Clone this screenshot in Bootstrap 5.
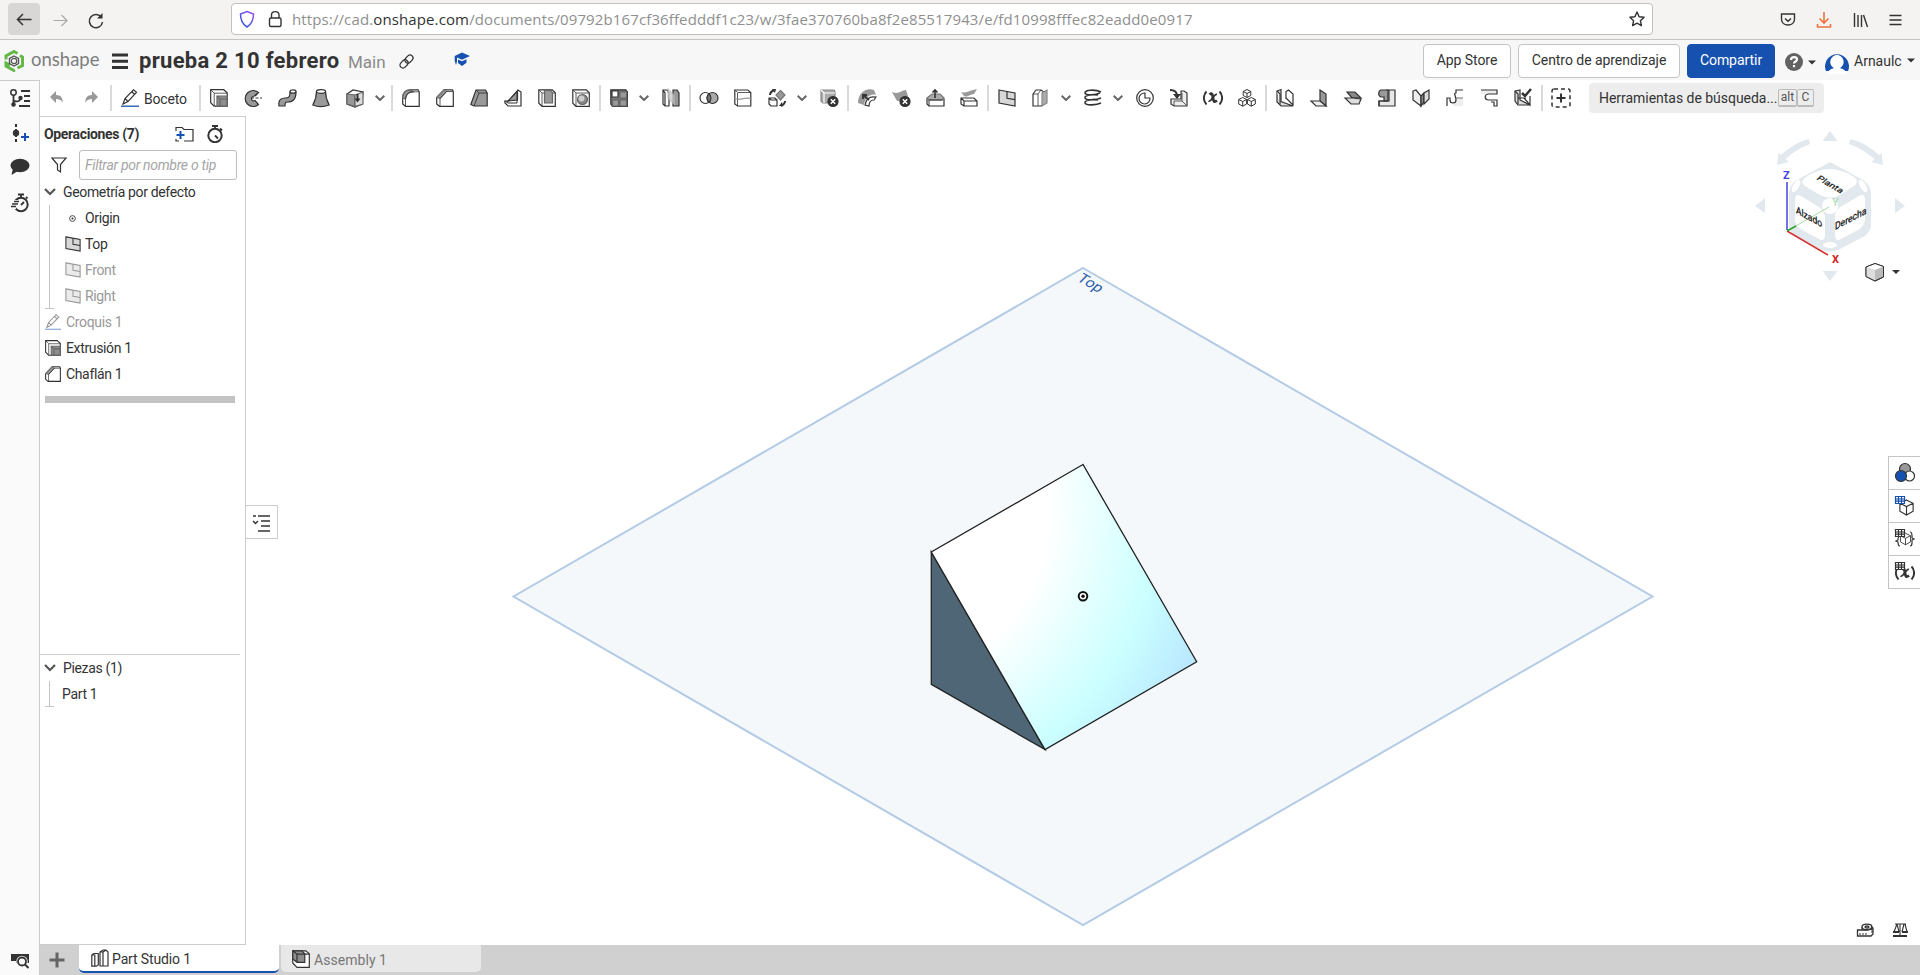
<!DOCTYPE html>
<html lang="es">
<head>
<meta charset="utf-8">
<title>prueba 2 10 febrero</title>
<meta name="viewport" content="width=device-width, initial-scale=1">
<link href="https://cdn.jsdelivr.net/npm/bootstrap@5.3.0/dist/css/bootstrap.min.css" rel="stylesheet">
<style>
html,body{height:100%}
body{font-family:Roboto,"Liberation Sans",sans-serif;font-size:14px;line-height:20px;color:#333;background:#fff;overflow:hidden}
svg{display:block;flex:none}
.ico{width:18px;height:18px;fill:none;stroke:#333;stroke-width:1.2;overflow:visible}
.browserbar{height:40px;background:#f4f3f2;border-bottom:1px solid #c6c4c2;font-family:"Open Sans",sans-serif}
.backbtn{width:32px;height:32px;background:#d8d7d6;border-radius:4px;margin:0 0 1px 8px}
.urlbox{width:1422px;height:32px;background:#fff;border:1px solid #c2c0be;border-radius:4px;margin-left:126px;margin-bottom:1px}
.urltext{font-size:15px;color:#8f8f8f;margin-left:8px;white-space:nowrap;letter-spacing:.12px}
.urltext b{font-weight:400;color:#333}
.dochead{height:40px;background:#f7f7f7;padding-top:1px}
.brandname{font-family:Lato,sans-serif;font-size:18.5px;color:#7d7d7d;margin-left:7px;width:81px;height:24px;line-height:20px}
.doctitle{font-size:22px;font-weight:700;line-height:40px;margin-left:11px;width:200px;white-space:nowrap;letter-spacing:.3px;padding-top:1px}
.maintxt{font-size:17px;color:#8b8b8b;margin-left:9px;width:50px;padding-top:3px}
.hbtn{height:34px;font-size:14px;padding:0;border:1px solid #c4c4c4;border-radius:4px;background:#fff;color:#333;letter-spacing:-.05px}
.hbtn.go{background:#1651b0;border-color:#1651b0;color:#fff}
.rail{width:40px;background:#fafafa;border-right:1px solid #ccc;border-top:1px solid #ccc}
.tools{height:36px}
.tool{width:34px;height:36px;display:flex;align-items:center;justify-content:center}
.tsep{width:2px;height:26px;background:#dadada;margin:0 1px}
.chev{width:18px;display:flex;justify-content:flex-start;padding-left:3px}
.chev svg{width:10px;height:6px;fill:none;stroke:#666;stroke-width:2}
.findbox{width:235px;height:30px;background:#ededed;border-radius:4px;margin-left:11px;padding-left:10px;white-space:nowrap}
.keycap{font-size:12px;line-height:15px;height:18px;border:1px solid #bbb;border-bottom-width:2px;border-radius:2px;color:#555;text-align:center}
.sidepanel{width:206px;border:1px solid #ccc;border-left:0;letter-spacing:-.35px}
.frow{height:26px;display:flex;align-items:center;white-space:nowrap}
.frow .ico{width:16px;height:16px}
.dim{color:#999}
.dim .ico{opacity:.5}
.filterbox{width:158px;height:30px;border:1px solid #bdbdbd;border-radius:3px;font-style:italic;color:#a5a5a5;padding:4px 5px;margin-left:12px;letter-spacing:-.3px}
.treegroup{margin-left:9px;position:relative}
.treegroup:before{content:"";position:absolute;left:0;top:0;bottom:0;width:1px;background:#c4c4c4}
.treegroup:after{content:"";position:absolute;left:-4px;bottom:0;width:9px;height:1px;background:#c4c4c4}
.rollbar{height:7px;width:190px;background:#c3c3c3;margin:9px 0 0 5px}
.flyout{position:absolute;left:0;top:389px;width:32px;height:34px;background:#fff;border:1px solid #ccc;border-left:0}
.sidebtns{position:absolute;right:0;top:340px;width:32px}
.sidebtns div{height:33px;border:1px solid #c4c4c4;border-right:0;border-bottom:0;background:#fff;padding:6px 0 0 6px}
.sidebtns div:last-child{border-bottom:1px solid #c4c4c4;height:34px}
.tabsbar{height:30px;background:#d0d0d0;letter-spacing:-.13px}
.stab{height:28px;width:200px;border-radius:0 0 5px 5px}
.stab.on{background:#fff;border-bottom:2px solid #1651b0}
.stab.off{background:#e8e8e8;color:#777;margin-left:2px;height:27px;letter-spacing:.05px}
</style>
</head>
<body class="d-flex flex-column">
<svg width="0" height="0" class="position-absolute">
<defs>
<symbol id="plane" viewBox="0 0 18 18"><path d="M1 1l16 3v13L1 14z" fill="#d8d8d8"/><path d="M9 2.500v6.800l8 1.400"/></symbol>
<symbol id="extrude" viewBox="0 0 18 18"><path d="M.7.7h13l3.500 3v13.500h-13l-3.500-3.500z" fill="#fff"/><path d="M4.200 17V4.200H17M1 1l3.200 3.200" stroke-width=".8"/><path d="M7 7h10v10H7z" fill="#8d8d8d" stroke="#666"/><path d="M7 7l3 3v7M10 10h7" stroke="#666"/></symbol>
<symbol id="chamfer" viewBox="0 0 18 18"><path d="M.7 8.500L8 .8h8.500l.8 1.500v15H3.500L.7 15z" fill="#fff"/><path d="M1 8.500L8 1l2.500 1.500L4 9.500z" fill="#999" stroke="#777"/><path d="M4 17V9.500l6.500-7H17" stroke-width=".8"/></symbol>
<symbol id="pencil" viewBox="0 0 18 18"><path d="M2 15L4 9.500 12.500.8l3 2.500L7 12.500zM4 9.500l3 3M10.800 2.800l3 2.700"/><path d="M0 17.200h18" stroke="#1651b0" stroke-width="1.300"/></symbol>
<symbol id="x" viewBox="0 0 18 18"><circle cx="9" cy="9" r="5" fill="#333"/><path d="M6.800 6.800l4.400 4.400m0-4.400l-4.400 4.400" stroke="#fff" stroke-width="1.500"/></symbol>
<symbol id="cube" viewBox="0 0 18 18"><path d="M9 1l7 3.500v8.500l-7 4-7-4V4.500zM2 4.500L9 8l7-3.500M9 8v9"/></symbol>
<symbol id="chv" viewBox="0 0 10 6"><path d="M.7.8L5 5 9.300.8"/></symbol>
<symbol id="fx" viewBox="0 0 20 18"><path d="M3.500 2.500C0 6 0 12 3.500 15.500M16.500 2.500c3.500 3.500 3.500 9.500 0 13" stroke-width="1.900"/><path d="M6.500 5.500C9 3.500 9.500 5 10 9s1.500 4.500 4 2.500" stroke-width="2.800"/><path d="M14 5.500C11 4 8.500 13.500 5.500 12" stroke-width="1.700"/></symbol>
<symbol id="watch" viewBox="0 0 18 18"><circle cx="9" cy="10.500" r="6.700" stroke-width="2"/><path d="M6 1h6M9 1v3M14 3.500l2 2M9 10.500l3 3" stroke-width="1.800"/></symbol>
</defs>
</svg>

<header class="browserbar d-flex align-items-center flex-shrink-0">
  <div class="backbtn d-flex align-items-center justify-content-center"><svg class="ico" viewBox="0 0 18 18"><path d="M2.500 9.500h14M8 4L2.500 9.500 8 15" stroke-width="1.500"/></svg></div>
  <svg class="ico" style="margin-left:11px;stroke:#aaa"><path d="M2.500 9.500h13.500M10.500 4L16 9.500 10.500 15"/></svg>
  <svg class="ico" style="margin-left:18px;stroke-width:1.500"><path d="M14.500 6.500A6.600 6.600 0 1 0 15.500 11"/><path d="M15.500 2v5.500h-5.500z" fill="#333" stroke="none"/></svg>
  <div class="urlbox d-flex align-items-center">
    <svg class="ico" style="margin-left:6px" viewBox="0 0 18 18"><defs><linearGradient id="shg" x1="0" x2="1" y1="1" y2="0"><stop stop-color="#1d5bd8"/><stop offset="1" stop-color="#a24df5"/></linearGradient></defs><path d="M9 1.500l6.500 2.500C15.500 10 14 14 9 17 4 14 2.500 10 2.500 4z" stroke="url(#shg)" stroke-width="1.500"/></svg>
    <svg class="ico" style="margin-left:10px;stroke-width:1.400"><rect x="3.500" y="8" width="11.500" height="8.500" rx="1.500"/><path d="M5.500 8V5c0-4.500 7.500-4.500 7.500 0v3"/></svg>
    <div class="urltext">https://cad.<b>onshape.com</b>/documents/09792b167cf36ffedddf1c23/w/3fae370760ba8f2e85517943/e/fd10998fffec82eadd0e0917</div>
    <svg class="ico ms-auto" style="margin-right:6px;stroke-width:1.400"><path d="M9 2l2.100 4.700 5 .5-3.700 3.500 1 5L9 13.200l-4.400 2.500 1-5L1.900 7.200l5-.5z" stroke-linejoin="round"/></svg>
  </div>
  <svg class="ico" style="margin-left:126px;stroke-width:1.400"><path d="M2.500 3h13v5c0 8-13 8-13 0zM6 7.500l3 2.800 3-2.800"/></svg>
  <svg class="ico" style="margin-left:18px;stroke:#f0743e;stroke-width:1.600"><path d="M9 1v10.500M4.500 7.500L9 12l4.500-4.500M2.500 13v3h13v-3"/></svg>
  <svg class="ico" style="margin-left:19px;stroke-width:1.400"><path d="M2.500 2v14M6 4v12M9.500 4v12M11.500 4l4 12"/></svg>
  <svg class="ico" style="margin-left:17px;stroke-width:1.300"><path d="M2.500 4.500h12M2.500 9h12M2.500 13.500h12"/></svg>
</header>

<section class="dochead d-flex align-items-center flex-shrink-0">
  <svg width="20" height="22" viewBox="0 0 20 22" style="margin-left:4px" fill="none" stroke="#62b946"><path d="M2 9.500V6l8-4.500 3.500 2M16 5.500l2.500 1.500v8.500L13.500 18M11 20l-1 .5L2 16v-3l4 2.300" stroke-width="3"/><path d="M10 6l4.500 2.500v5L10 16l-4.500-2.500v-5z" stroke="#555" stroke-width="1.400"/><circle cx="10" cy="11" r="2.700" stroke="#555" stroke-width="1.200"/></svg>
  <div class="brandname">onshape</div>
  <svg width="16" height="16" viewBox="0 0 16 16" stroke="#333" stroke-width="3"><path d="M0 2h16M0 8.300h16M0 14.500h16"/></svg>
  <div class="doctitle">prueba 2 10 febrero</div>
  <div class="maintxt">Main</div>
  <svg class="ico" style="width:16px;height:16px" viewBox="0 0 16 16"><g transform="translate(.5 .5) rotate(-45 8 8)"><rect x="0" y="5" width="9" height="6" rx="3"/><rect x="7" y="5" width="9" height="6" rx="3"/></g></svg>
  <svg width="16" height="16" viewBox="0 0 16 16" style="margin:-2px 0 0 40px" fill="#1651b0"><path d="M8 .5l8 3.500-8 3.700-5-2.300v4L2 13 .7 9V4zM4 7.500l4 1.800 4.500-2v3.500L8 14l-4-3z"/></svg>
  <button class="btn hbtn ms-auto" style="width:88px;margin-right:7px">App Store</button>
  <button class="btn hbtn" style="width:162px;margin-right:7px">Centro de aprendizaje</button>
  <button class="btn hbtn go" style="width:88px;margin-right:10px">Compartir</button>
  <svg width="18" height="18" viewBox="0 0 18 18" style="margin-top:3px"><circle cx="9" cy="9" r="9" fill="#626262"/><path d="M6 7c0-4 6-3.500 6-.5 0 2-3 2-3 4M9 12v2.200" fill="none" stroke="#fff" stroke-width="2.200"/></svg>
  <svg width="8" height="5" viewBox="0 0 8 5" style="margin:3px 9px 0 5px" fill="#333"><path d="M0 .5h8L4 4.500z"/></svg>
  <svg width="24" height="24" viewBox="0 0 24 24" style="margin-top:2px"><path d="M1 21a12 12 0 1 1 22 0z" fill="#1651b0"/><path d="M3 24c0-4 3-5 6-6-7-4-3-13 3-13s10 9 3 13c3 1 6 2 6 6z" fill="#fff"/></svg>
  <div style="margin-left:5px;width:53px">Arnaulc</div>
  <svg width="8" height="5" viewBox="0 0 8 5" style="margin-right:5px" fill="#333"><path d="M0 .5h8L4 4.500z"/></svg>
</section>

<div class="d-flex flex-grow-1" style="min-height:0">
  <nav class="rail d-flex flex-column flex-shrink-0 align-items-center">
    <svg class="ico" style="margin-top:8px;width:20px;height:18px;stroke-width:2" viewBox="0 0 20 18"><circle cx="3.500" cy="3.500" r="2.700" stroke-width="1.500"/><path d="M3.500 6v10M3.500 12c5 1 7 0 7-3" stroke-width="1.800"/><circle cx="10.500" cy="9" r="1.200" fill="#333"/><circle cx="3.500" cy="15.500" r="1.300" fill="#333"/><path d="M11 2h9M14 7h6M14 12h6M9 17h11"/></svg>
    <svg class="ico" style="margin-top:16px;width:20px;height:20px" viewBox="0 0 20 20"><path d="M6 1v18" stroke-dasharray="3 2" stroke-width="2"/><circle cx="6" cy="10" r="3.200" fill="#333" stroke="none"/><path d="M15 10v8M11 14h8" stroke="#1651b0" stroke-width="2"/></svg>
    <svg width="20" height="18" viewBox="0 0 20 18" style="margin-top:15px" fill="#333"><ellipse cx="10" cy="7.500" rx="9.500" ry="6.700"/><path d="M3 10l-1.500 7L8 13z"/></svg>
    <svg class="ico" style="margin-top:17px;width:19px;height:20px" viewBox="0 0 19 20"><circle cx="11" cy="11.500" r="6.700" stroke-width="2"/><path d="M8 1.500h6M11 2v3M16 4l1.500 1.500M11 12l3-3" stroke-width="1.800"/><path d="M3 8.500h6M1 11.500h7M0 14.500h6" stroke="#fafafa" stroke-width="3"/><path d="M4 8.500h5M2 11h6M1 13.500h5" stroke-width="1.300"/></svg>
    <svg width="20" height="16" viewBox="0 0 20 16" style="margin-top:auto;margin-bottom:6px" fill="none"><path d="M1 1h18v9H6V8H1z" fill="#333"/><circle cx="12" cy="8.500" r="5.700" fill="#fafafa"/><circle cx="12" cy="8.500" r="4" stroke="#333" stroke-width="1.800"/><path d="M15 11.500l3.500 3.500" stroke="#333" stroke-width="2"/></svg>
  </nav>
  <div class="d-flex flex-column flex-grow-1">
    <div class="tools d-flex align-items-center flex-shrink-0">
      <div class="tool"><svg class="ico"><path d="M8 2v4c5 0 7 3 6.500 8-1-3-3-4-6.500-4v4L2 8z" fill="#999" stroke="none"/></svg></div>
      <div class="tool" style="margin-right:1px"><svg class="ico"><path d="M10 2v4C5 6 3 9 3.500 14c1-3 3-4 6.500-4v4l6-6z" fill="#999" stroke="none"/></svg></div>
      <div class="tsep"></div>
      <div class="d-flex align-items-center" style="width:85px;padding-left:8px"><svg class="ico"><use href="#pencil"/></svg><span style="margin-left:5px;padding-top:2px;letter-spacing:-.2px">Boceto</span></div>
      <div class="tsep"></div>
      <div class="tool"><svg class="ico"><use href="#extrude"/></svg></div>
      <div class="tool"><svg class="ico"><path d="M14.500 3.500A8 8 0 1 0 14.500 15.500l-3.500-4c-4 2-5-4-.5-4.500z" fill="#999"/><path d="M7 9h11M11 7l4-3.500" stroke-dasharray="3 1.500"/></svg></div>
      <div class="tool"><svg class="ico"><path d="M1 17c-1-7 3-8 6-8 4 0 5-1 5-6h6c0 8-4 10-8 10-3 0-3 1-3 4z" fill="#999"/><ellipse cx="15" cy="2.500" rx="3" ry="1.700" fill="#fff"/></svg></div>
      <div class="tool"><svg class="ico"><path d="M4.500 2.500C4.500 9 3 12 .8 16c5 2 11 2 16.400 0C15 12 13.500 9 13.500 2.500z" fill="#999"/><ellipse cx="9" cy="2.500" rx="4.500" ry="1.800" fill="#fff"/></svg></div>
      <div class="tool"><svg class="ico"><path d="M1 5l6-4 10 2-1 12-7 3-8-3z" fill="#fff"/><path d="M1 5l8 1v11.500L1 15z" fill="#999" stroke="#666"/><path d="M9 6l8-3v12l-8 2.500z" fill="#ddd" stroke="#666"/><path d="M11.500 5v6" stroke-width="2"/><path d="M8.500 9.500h6l-3 4z" fill="#333" stroke="none"/></svg></div>
      <div class="chev"><svg><use href="#chv"/></svg></div>
      <div class="tsep"></div>
      <div class="tool"><svg class="ico"><path d="M.7 9C.7 3 4 .8 9 .8h7l1.200 2v14.500H3.500L.7 15z" fill="#fff"/><path d="M.7 9C.7 3 4 .8 9 .8l2 2C6 3 4 5 3.500 10z" fill="#999" stroke="#666"/><path d="M3.500 17v-7C4 5 6 3 11 2.800h6" stroke-width=".8"/></svg></div>
      <div class="tool"><svg class="ico"><use href="#chamfer"/></svg></div>
      <div class="tool"><svg class="ico"><path d="M.8 15.500L6 1h9.500l1.700 3v13H4z" fill="#999"/><path d="M4 17L9 4l-3-3M9 4h8" stroke-width=".9"/></svg></div>
      <div class="tool"><svg class="ico"><path d="M.8 12h4L14 1l3 2v14H4l-3-3z" fill="#fff"/><path d="M4 12L13.500 2v9z" fill="#999"/><path d="M1 12l3 2h9V2" stroke-width="1"/></svg></div>
      <div class="tool"><svg class="ico"><path d="M.8.8h13.500l3 3v13.500H4l-3.200-3z" fill="#fff"/><path d="M4 17V4M1 1l3 3h13" stroke-width=".8"/><path d="M6.500 1.500h6.500L14.500 4v10h-8z" fill="#999" stroke="#666"/></svg></div>
      <div class="tool"><svg class="ico"><path d="M.8.8h13.500l3 3v13.500H4l-3.200-3z" fill="#fff"/><path d="M4 17V4M1 1l3 3h13" stroke-width=".8"/><circle cx="10.500" cy="10.500" r="5" fill="#888" stroke="#666"/><circle cx="9.500" cy="9.500" r="3" fill="#ccc" stroke="none"/></svg></div>
      <div class="tsep"></div>
      <div class="tool"><svg class="ico"><path d="M.8.8h15l1.500 2v14.500H2.500L.8 15z" fill="#777"/><path d="M2 2h6v6H2z" fill="#fff"/><path d="M10 3h6.500v6H10zM2.500 11h6v6h-6zM10 11h6.500v6H10z" fill="#999" stroke="#666"/></svg></div>
      <div class="chev"><svg><use href="#chv"/></svg></div>
      <div class="tool"><svg class="ico"><path d="M1 1h4l2 3v13H3l-2-2zM3 17V4L1 1" fill="#fff"/><path d="M11 1h4l2 3v13h-6z" fill="#999"/><path d="M6 0l6 6v9L6 9z" fill="#ccc" stroke="#bbb" opacity=".8"/></svg></div>
      <div class="tsep"></div>
      <div class="tool"><svg class="ico"><circle cx="5.500" cy="9" r="5.500" fill="#fff"/><circle cx="12.500" cy="9" r="5.500" fill="#aaa"/><path d="M9 4.800a5.500 5.500 0 0 1 0 8.400 5.500 5.500 0 0 1 0-8.400" fill="#777"/></svg></div>
      <div class="tool"><svg class="ico"><path d="M.8 1h13l3 2.500V17H3.500L.8 15z" fill="#fff"/><path d="M.8 1l3 2.500h13M3.500 17V4" stroke-width=".8"/><path d="M0 9c6 4 9-2 18 1" stroke="#999"/></svg></div>
      <div class="tool"><svg class="ico"><path d="M1 9h6l2 2v6H3l-2-2zM1 9l2 2h6" fill="#fff"/><path d="M12.500 1.500l4.500 4.500-4.500 5L8 6z" fill="#999" stroke="#777"/><path d="M2 6q0-3 4-5M17 12q0 3-4 5" stroke-width="2"/><path d="M4 0h4L7 4zM14 13l-3 4h4z" fill="#333" stroke="none"/></svg></div>
      <div class="chev"><svg><use href="#chv"/></svg></div>
      <div class="tool"><svg class="ico"><path d="M1 1h13l1 2v11H3l-2-2z" fill="#aaa" stroke="#888"/><path d="M1 1l3 3h11M4 4v10" stroke="#fff"/><use href="#x" x="4" y="3.500" width="18" height="18"/></svg></div>
      <div class="tsep"></div>
      <div class="tool"><svg class="ico"><path d="M0 14C0 4 8-2 16 1l2 5C11 4 7 10 6 16z" fill="#999" stroke="none"/><path d="M7 16c1-6 5-9 11-8l-2 3c-4 0-5 3-5 6z" fill="#fff"/><path d="M11 11L5 6m0 4V6h4" stroke-width="1.800"/></svg></div>
      <div class="tool"><svg class="ico"><path d="M0 3c7 3 9-2 14-2l3 9c-5 0-8 2-12 2z" fill="#999" stroke="none"/><use href="#x" x="4" y="3.500" width="18" height="18"/></svg></div>
      <div class="tool"><svg class="ico"><path d="M1 10l5-4h8l4 4v7H3l-2-2z" fill="#fff"/><path d="M1 9l5-4h8l4 4-3 2H3z" fill="#aaa" stroke="#777"/><path d="M3 17v-6h14" stroke-width="1"/><path d="M9 9V1M6.500 3.500L9 1l2.500 2.500" stroke-width="1.600"/></svg></div>
      <div class="tool"><svg class="ico"><path d="M1 3c5 2 9-2 16-3l-3 5c-4 0-7 4-10 2z" fill="#999" stroke="none"/><path d="M1 9h13l3 3v5H4l-3-2zM1 9l3 3h13M4 12v5" fill="#fff"/></svg></div>
      <div class="tsep"></div>
      <div class="tool"><svg class="ico"><use href="#plane"/></svg></div>
      <div class="tool"><svg class="ico"><path d="M1 5l3-4h5l3 2v12l-3 2H1z" fill="#fff"/><path d="M1 5h5l3-4M6 5v12" stroke-width=".8"/><path d="M10 4l5-3v13l-5 3z" fill="#aaa" stroke="#888"/></svg></div>
      <div class="chev"><svg><use href="#chv"/></svg></div>
      <div class="tool"><svg class="ico" style="stroke-width:1.600"><path d="M17 3C11 0 0 1 1 4s11 2 15 0M14 6C9 5 0 6 1 9s12 2 16 0M14 11c-5-1-14 0-13 3s12 2 16 0"/></svg></div>
      <div class="chev"><svg><use href="#chv"/></svg></div>
      <div class="tool"><svg class="ico"><circle cx="9" cy="9" r="8.300"/><path d="M9 4v5h5a5.500 5.500 0 1 1-5-5z" fill="#fff"/></svg></div>
      <div class="tool"><svg class="ico"><path d="M1 10v5l3 2h13V4l-3-2h-3v8z" fill="#eee"/><path d="M4 17v-5h8V4M12 12l4 4" stroke-width=".8"/><path d="M0 1c5 0 7 2 7 6" stroke-width="2"/><path d="M3 5h8l-4 5z" fill="#333" stroke="none"/></svg></div>
      <div class="tool"><svg class="ico" style="width:20px" viewBox="0 0 20 18"><use href="#fx" width="20" height="18"/></svg></div>
      <div class="tool"><svg class="ico" viewBox="0 0 18 18"><g stroke-width="1"><path d="M9 .5l3.800 2v4L9 8.500l-3.800-2v-4zM5.200 2.500L9 4.500l3.800-2M9 4.500v4M4.700 8.500l3.900 2v4.500l-3.900 2.200-4-2.200v-4.500zM.7 10.500l4 2 3.900-2M4.700 12.500v4.700M13.300 8.500l4 2v4.500l-4 2.200-3.900-2.200v-4.500zM9.400 10.500l3.900 2 4-2M13.300 12.500v4.700"/></g></svg></div>
      <div class="tsep"></div>
      <div class="tool"><svg class="ico"><path d="M1 2l4-1.500v12l12 4.500H5l-4-4z" fill="#ddd"/><path d="M1 2l3 3v10.500M10 10V2.500L12.500 1 17 5v11L10 9" fill="#fff"/></svg></div>
      <div class="tool"><svg class="ico"><path d="M10 1l6 4v12l-6-5z" fill="#999"/><path d="M1 12h9l6 5H6z" fill="#eee"/></svg></div>
      <div class="tool"><svg class="ico"><path d="M3 3h8l6 6H8z" fill="#888"/><path d="M1 9h8l8 1-2 5H7z" fill="#ddd"/></svg></div>
      <div class="tool"><svg class="ico"><path d="M9 1h8v16H1v-5h8z" fill="#e8e8e8"/><path d="M3 1h7v11H6V8H3C0 7 0 2 3 1z" fill="#999"/><path d="M1 17v-5h10V1"/></svg></div>
      <div class="tool"><svg class="ico"><path d="M1 2l3-1 5 6v10l-8-6z" fill="#eee"/><path d="M9 7l3-3v9l-3 4z" fill="#888"/><path d="M12 4l5-3v9l-5 5z" fill="#ddd"/></svg></div>
      <div class="tool"><svg class="ico"><path d="M10 9h7v8H7v-4q4 0 3-4z" fill="#eee" stroke="none"/><path d="M1 17V9h3v2c0 4 6 4 6 0S7 4 10 4V1h7" stroke-width="1.200"/><path d="M10 9h7" stroke="#888"/></svg></div>
      <div class="tool"><svg class="ico"><path d="M1 1h16v4H7v6H4V5H1z" fill="#eee" stroke="none"/><path d="M1 1h16v4H9c-5 0-5 6 0 6h8v6h-3v-4h-3" stroke-width="1.200"/></svg></div>
      <div class="tool"><svg class="ico"><path d="M1 2l5-1v10l10 5H4l-3-4z" fill="#ddd"/><path d="M1 2l3 3v10M10 9l6 7V7M4 9h8" /><path d="M8 4l3 3 6-7" stroke-width="2.500"/></svg></div>
      <div class="tsep"></div>
      <div class="tool"><svg class="ico" style="width:20px;height:20px" viewBox="0 0 20 20"><rect x="1" y="1" width="18" height="18" rx="2" stroke-dasharray="4 3" stroke-width="1.500"/><path d="M10 5.500v9M5.500 10h9" stroke-width="2"/></svg></div>
      <div class="findbox d-flex align-items-center"><span style="width:179px;letter-spacing:-.03px">Herramientas de búsqueda...</span><span class="keycap" style="width:19px">alt</span><span class="keycap" style="width:17px">C</span></div>
    </div>
    <div class="d-flex flex-grow-1" style="min-height:0">
      <aside class="sidepanel d-flex flex-column flex-shrink-0">
        <div class="d-flex align-items-center" style="height:32px;padding:1px 0 0 4px"><b class="fw-bold" style="width:131px">Operaciones (7)</b>
          <svg class="ico" style="width:19px;height:16px" viewBox="0 0 19 16"><path d="M1 5V1.500h6l2 2h9V15H9M1 13v2h3"/><path d="M5.500 5v8M1.500 9h8" stroke="#1651b0" stroke-width="2"/></svg>
          <svg class="ico" style="margin-left:12px"><use href="#watch"/></svg></div>
        <div class="d-flex align-items-center" style="height:30px;padding-top:1px"><svg class="ico" style="width:16px;height:16px;margin-left:11px" viewBox="0 0 16 16"><path d="M1 1h14l-5.500 6.500V15L6.500 13V7.500z"/></svg><div class="filterbox">Filtrar por nombre o tip</div></div>
        <div class="frow"><svg width="12" height="8" viewBox="0 0 12 8" style="margin:0 7px 0 4px" fill="none" stroke="#555" stroke-width="2.200"><path d="M1 1l5 5 5-5"/></svg>Geometría por defecto</div>
        <div class="treegroup">
          <div class="frow" style="padding-left:20px"><svg class="ico" style="width:7px;height:7px" viewBox="0 0 8 8"><circle cx="4" cy="4" r="3.300" stroke-width="1"/><circle cx="4" cy="4" r="1.200" fill="#333" stroke="none"/></svg><span style="margin-left:9px">Origin</span></div>
          <div class="frow" style="padding-left:16px"><svg class="ico"><use href="#plane"/></svg><span style="margin-left:4px">Top</span></div>
          <div class="frow dim" style="padding-left:16px"><svg class="ico"><use href="#plane"/></svg><span style="margin-left:4px">Front</span></div>
          <div class="frow dim" style="padding-left:16px"><svg class="ico"><use href="#plane"/></svg><span style="margin-left:4px">Right</span></div>
        </div>
        <div class="frow dim" style="padding-left:5px"><svg class="ico"><use href="#pencil"/></svg><span style="margin-left:5px">Croquis 1</span></div>
        <div class="frow" style="padding-left:5px"><svg class="ico"><use href="#extrude"/></svg><span style="margin-left:5px">Extrusión 1</span></div>
        <div class="frow" style="padding-left:5px"><svg class="ico"><use href="#chamfer"/></svg><span style="margin-left:5px">Chaflán 1</span></div>
        <div class="rollbar"></div>
        <div class="mt-auto" style="height:290px;margin-right:5px;border-top:1px solid #ccc">
          <div class="frow"><svg width="12" height="8" viewBox="0 0 12 8" style="margin:0 7px 0 4px" fill="none" stroke="#555" stroke-width="2.200"><path d="M1 1l5 5 5-5"/></svg>Piezas (1)</div>
          <div class="treegroup"><div class="frow" style="padding-left:13px">Part 1</div></div>
        </div>
      </aside>
      <main class="position-relative flex-grow-1">
        <svg width="1674" height="828" viewBox="246 116 1674 828">
          <defs><radialGradient id="face" gradientUnits="userSpaceOnUse" cx="867" cy="507" r="365"><stop offset=".5" stop-color="#fff"/><stop offset=".8" stop-color="#cbffff"/><stop offset="1" stop-color="#b8e6ff"/></radialGradient></defs>
          <path d="M1083 268L1652.500 596.500 1083 925 513.500 596.500z" fill="#f4f8fb" stroke="#b4cbe5" stroke-width="2"/>
          <text transform="matrix(.87 .5 -.87 .5 1075 279)" transform-origin="0 0" font-family="Roboto" font-size="17" fill="#2c5fa6" textLength="25" lengthAdjust="spacingAndGlyphs" visibility="hidden"></text>
          <text transform="matrix(.87 .5 -.6 .62 1076 280)" font-family="Roboto" font-size="17" fill="#2c5fa6" textLength="26" lengthAdjust="spacingAndGlyphs">Top</text>
          <path d="M931.300 552v132.400L1045 749.600z" fill="#4e6676" stroke="#222" stroke-width="1.300"/>
          <path d="M1083 464.500L931.300 552 1045 749.600 1196.700 661.700z" fill="url(#face)" stroke="#222" stroke-width="1.300"/>
          <circle cx="1083" cy="596.300" r="4.300" fill="#fff" stroke="#111" stroke-width="2"/><circle cx="1083" cy="596.300" r="1.700" fill="#111"/>
          <g fill="#e1e8ee">
            <path d="M1830 131l7.500 10h-15zM1830 281l7.500-10h-15zM1755 206l10-8v15zM1905 206l-10-8v15z"/>
            <path d="M1777 165l1.500-12 2.500 2q13-12 27.500-16l1.500 5q-14 5-24.500 15l3 3zM1883 165l-1.500-12-2.500 2q-13-12-28.500-16l-1.500 5q14 5 25.500 15l-3 3z"/>
            <path d="M1830 162l33 18q7 5 8 12v34q-1 7-8 11l-25 13q-8 3-16 0l-26-14q-7-4-7-11v-33q1-8 8-12z"/>
          </g>
          <g fill="#fff">
            <path d="M1806 177q24-16 48 0 6 4 0 9l-14 9q-10 5-20 0l-15-9q-6-4 1-9z"/>
            <path d="M1795 198q1-5 6-2l18 11q5 4 6 9v20q-1 6-6 3l-17-9q-7-4-7-11zM1865 198q-1-5-6-2l-19 11q-5 4-5 9v20q1 6 6 3l17-9q7-4 7-11z"/>
            <circle cx="1830" cy="206" r="8"/><ellipse cx="1796" cy="186" rx="3" ry="7" transform="rotate(30 1796 186)"/><ellipse cx="1863" cy="186" rx="3" ry="7" transform="rotate(-30 1863 186)"/><ellipse cx="1830" cy="245" rx="7" ry="3"/>
          </g>
          <path d="M1787 231l42-24" stroke="#a5dba5"/>
          <g font-family="Roboto" fill="#222" stroke="#222" stroke-width=".3" font-size="10">
            <text transform="matrix(.85 .5 -.6 .55 1816 179)" textLength="29" lengthAdjust="spacingAndGlyphs">Planta</text>
            <text transform="matrix(.87 .48 0 1 1796 213)" textLength="30" lengthAdjust="spacingAndGlyphs">Alzado</text>
            <text transform="matrix(.87 -.46 0 1 1835 230)" textLength="36" lengthAdjust="spacingAndGlyphs">Derecha</text>
          </g>
          <path d="M1787 230v-48" stroke="#4444dd" stroke-width="1.500"/><path d="M1787 231l41 24" stroke="#d43333" stroke-width="1.500"/><path d="M1787 231l9-5" stroke="#2aa32a" stroke-width="1.500"/>
          <g font-family="Roboto" font-weight="700" font-size="11"><text x="1783" y="179" fill="#4444dd">Z</text><text x="1832" y="263" fill="#d42222">X</text><text x="1832" y="206" fill="#a5dba5" font-weight="400">Y</text></g>
          <g stroke="#333" stroke-linejoin="round"><path d="M1866 267l9-3.500 8.500 3v10.500l-8.500 4-9-4.500z" fill="#bbb"/><path d="M1866 267l9 3v11l-9-4.500z" fill="#ddd" stroke="none"/><path d="M1866 267l9-3.500 8.500 3-8.500 3.500z" fill="#fff" stroke="none"/><path d="M1866 267l9-3.500 8.500 3v10.500l-8.500 4-9-4.500z" fill="none"/></g>
          <path d="M1892 270h8l-4 4z" fill="#333"/>
          <g fill="none" stroke="#333" stroke-width="1.300"><path d="M1857.500 930h9l5-1v-2l1.500 1v6l-2 2h-13.500z"/><ellipse cx="1867" cy="927" rx="5" ry="2.800"/><ellipse cx="1867" cy="927" rx="2" ry="1"/><path d="M1872 927v6M1860 933v2M1863 933v2M1866 933v2M1862 927v3" stroke-width="1"/><path d="M1895 924h11M1897 924l-3 8m3-8l2 8M1904 924l-2 8m3-8l2 8M1900 924v11" stroke-width="1.100"/><path d="M1893 932h6M1902 932h6M1893 936h14" stroke-width="2"/></g>
        </svg>
        <div class="flyout"><svg class="ico" style="margin:8px 0 0 7px"><path d="M5 2h12M8 7h9M8 12h9M5 17h12M0 2h3M0 7l2.500 2.500L5 7" stroke-width="1.400"/></svg></div>
        <div class="sidebtns">
          <div><svg class="ico" style="width:20px;height:20px" viewBox="0 0 20 20"><circle cx="10" cy="6" r="5.500" fill="#999"/><circle cx="14.500" cy="13" r="5" fill="#fff"/><circle cx="6" cy="13" r="5.500" fill="#1651b0"/></svg></div>
          <div><svg class="ico" style="width:20px;height:20px" viewBox="0 0 20 20"><use href="#cube" x="3" y="3" width="17" height="17"/><path d="M.5.500h9v7h-9zM.5 3h9M.5 5.200h9M3.500 1v6M6.500 1v6" fill="#fff" stroke="#1651b0"/></svg></div>
          <div><svg class="ico" style="width:20px;height:20px" viewBox="0 0 20 20"><use href="#cube" x="4" y="3" width="13" height="14"/><path d="M4 8q-1 0-1 3l-2 1 2 1q0 4 2 4M15 3q2 0 2 4v2l2 1-2 1v3q0 3-2 3"/><path d="M.5.500h9v7h-9zM.5 3h9M.5 5.200h9M3.500 1v6M6.500 1v6" fill="#fff"/></svg></div>
          <div><svg class="ico" style="width:20px;height:20px" viewBox="0 0 20 20"><use href="#fx" x="0" y="2" width="20" height="18"/><path d="M.5.500h9v7h-9zM.5 3h9M.5 5.200h9M3.500 1v6M6.500 1v6" fill="#fff"/></svg></div>
        </div>
      </main>
    </div>
    <footer class="tabsbar d-flex flex-shrink-0">
      <svg width="16" height="16" viewBox="0 0 16 16" style="margin:7px 15px 0 9px" stroke="#666" stroke-width="3"><path d="M8 .5v15M.5 8h15"/></svg>
      <div class="stab on d-flex align-items-center" style="margin-left:-1px"><svg class="ico" style="margin-left:12px"><path d="M.8 6l2-1.500h4.500V16l-2 1.200H.8zM.8 6h3v11M9 3l3-2h3l2 2v14H9zM9 3h3v14M12 3l3-2" fill="#fff"/></svg><span style="margin-left:3px;padding-top:2px">Part Studio 1</span></div>
      <div class="stab off d-flex align-items-center"><svg class="ico" style="margin-left:11px"><path d="M.8.8h13l3.500 3v13.500H5L.8 13z" fill="#fff"/><path d="M.8.8h9l3 3v8.500H5L.8 9z" fill="#8d8d8d"/><path d="M.8.8L5 4.200h12M5 4.200V12"/></svg><span style="margin-left:4px;padding-top:2px">Assembly 1</span></div>
    </footer>
  </div>
</div>
<script src="https://cdn.jsdelivr.net/npm/bootstrap@5.3.0/dist/js/bootstrap.bundle.min.js"></script>
</body>
</html>
